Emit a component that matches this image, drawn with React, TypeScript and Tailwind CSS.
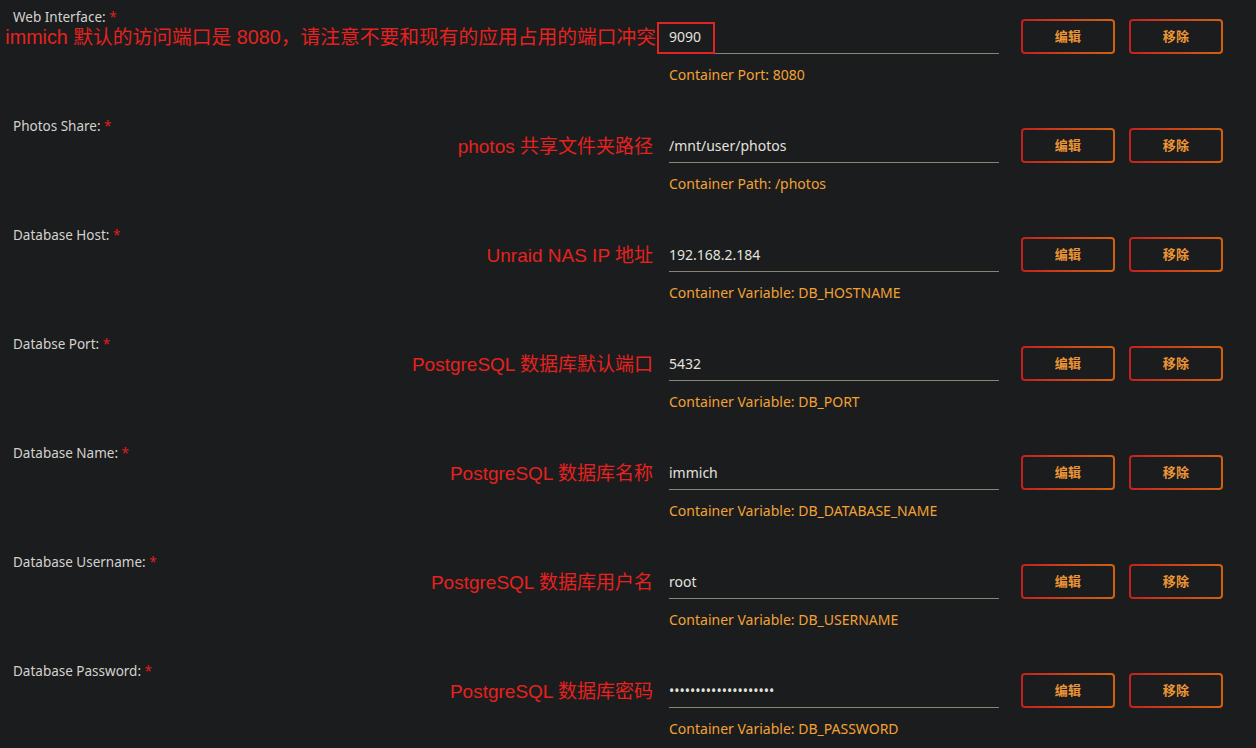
const rows = [
  { label: "Web Interface:", note: "immich 默认的访问端口是 8080，请注意不要和现有的应用占用的端口冲突", value: "9090", sub: "Container Port: 8080", boxed: true },
  { label: "Photos Share:", note: "photos 共享文件夹路径", value: "/mnt/user/photos", sub: "Container Path: /photos" },
  { label: "Database Host:", note: "Unraid NAS IP 地址", value: "192.168.2.184", sub: "Container Variable: DB_HOSTNAME" },
  { label: "Databse Port:", note: "PostgreSQL 数据库默认端口", value: "5432", sub: "Container Variable: DB_PORT" },
  { label: "Database Name:", note: "PostgreSQL 数据库名称", value: "immich", sub: "Container Variable: DB_DATABASE_NAME" },
  { label: "Database Username:", note: "PostgreSQL 数据库用户名", value: "root", sub: "Container Variable: DB_USERNAME" },
  { label: "Database Password:", note: "PostgreSQL 数据库密码", value: "••••••••••••••••••••", sub: "Container Variable: DB_PASSWORD" },
];

function GradButton({ children }: { children: React.ReactNode }) {
  return (
    <button className="w-[94px] h-[35px] p-[2px] rounded-[4px] bg-gradient-to-r from-[#c41f1f] to-[#d3600e]">
      <span className="flex w-full h-full items-center justify-center rounded-[2px] bg-[#1b1c1e] text-[13px] font-bold text-[#ec9535] tracking-wide">
        {children}
      </span>
    </button>
  );
}

export default function App() {
  return (
    <div className="w-full h-[748px] overflow-hidden bg-[#1b1c1e] font-['Noto_Sans','Noto_Sans_CJK_SC',sans-serif]">
      {rows.map((r) => (
        <div key={r.label} className="flex h-[109px]">
          <div className="w-[669px] shrink-0 flex flex-col pt-[9px]">
            <div className="pl-[13px] h-[17px] text-[13.5px] leading-[17px] text-[#d4d2cc]">
              {r.label} <span className="text-[#e01e1e]">*</span>
            </div>
            <div
              className={
                "text-right whitespace-nowrap leading-[23px] text-[#e5221f] font-['Liberation_Sans','Noto_Sans_CJK_SC',sans-serif] " +
                (r.boxed ? "pr-[13px] text-[19.75px]" : "pr-[16px] text-[19px]")
              }
            >
              {r.note}
            </div>
          </div>
          <div className="flex flex-col">
            <div className="flex items-start gap-[22px]">
              <div className="relative mt-[20px]">
                <input
                  readOnly
                  value={r.value}
                  className="w-[330px] h-[34px] bg-transparent border-b border-[#8a8376] text-[14px] text-[#e4e2de] outline-none"
                />
                {r.boxed && (
                  <div className="absolute left-[-12px] top-[2px] w-[58px] h-[32px] border-2 border-[#e02424]" />
                )}
              </div>
              <div className="flex gap-[14px] mt-[19px]">
                <GradButton>编辑</GradButton>
                <GradButton>移除</GradButton>
              </div>
            </div>
            <div className="mt-[11px] text-[14px] leading-[20px] text-[#f2a234]">{r.sub}</div>
          </div>
        </div>
      ))}
    </div>
  );
}
